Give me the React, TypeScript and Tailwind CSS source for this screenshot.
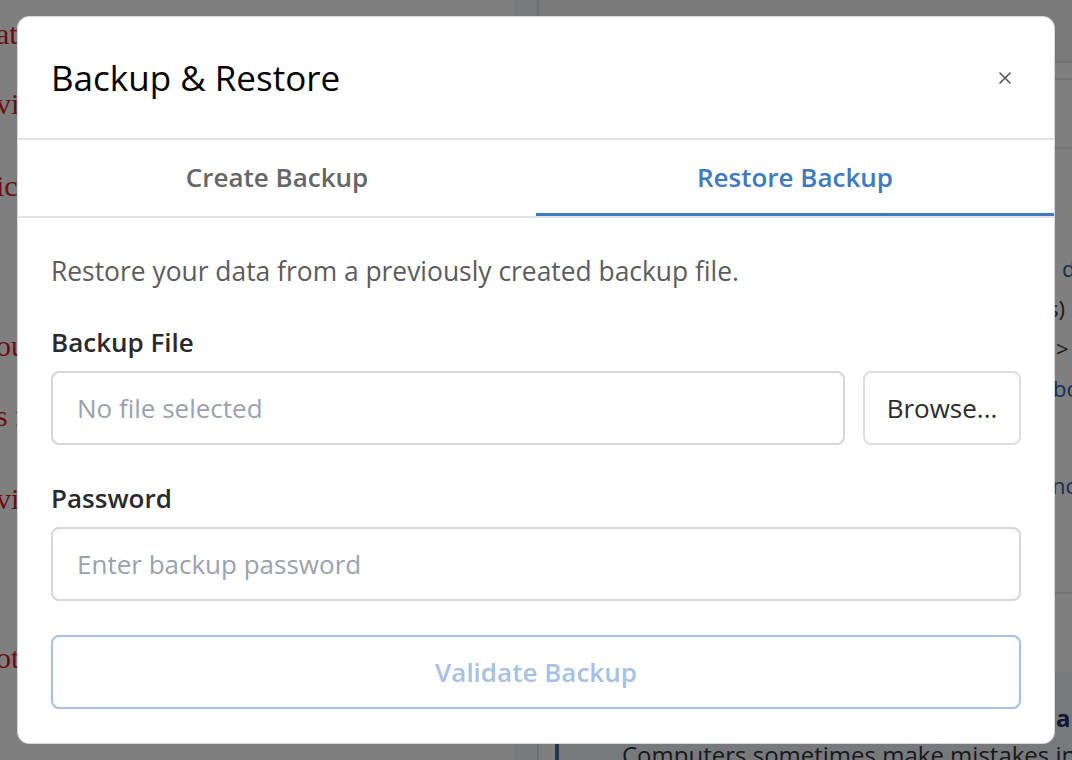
import { useState } from "react";

const leftLines = [
  { mt: "mt-[16px]", text: "atque the quick answer to what we have" },
  { mt: "mt-[34px]", text: "vi the people who have been using it" },
  { mt: "mt-[46px]", text: "ic the most common problem by far" },
  { mt: "mt-[124px]", text: "ou will want to keep a copy of this" },
  { mt: "mt-[34px]", text: "s r the settings and the history" },
  { mt: "mt-[47px]", text: "vi the other devices you have" },
  { mt: "mt-[123px]", text: "ot the notes kept in this place" },
];

function BackgroundPage() {
  return (
    <div className="flex h-[760px] w-[1072px] overflow-hidden bg-white">
      <div className="w-[514px] shrink-0 overflow-hidden font-['Liberation_Serif',serif] text-[30px] leading-[36px] text-[#d81c1c]">
        {leftLines.map((l, i) => (
          <div key={i} className={`${l.mt} -ml-[4px] whitespace-nowrap`}>
            {l.text}
          </div>
        ))}
      </div>
      <div className="w-[25px] shrink-0 border-r-2 border-[#dedede] bg-[#f3f5f8]" />
      <div className="flex min-w-0 flex-1 flex-col overflow-hidden font-['Open_Sans',sans-serif] text-[22px]">
        <div className="h-[63px] shrink-0 border-b-2 border-[#e4e4e4] bg-[#f2f2f2]" />
        <div className="h-[17px] shrink-0 border-b-2 border-[#e4e4e4]" />
        <div className="h-[69px] shrink-0 border-b-2 border-[#e4e4e4]" />
        <div className="flex flex-col pt-[99px] leading-[40px] whitespace-nowrap">
          <div className="pl-[523px] text-[#2b5ea8]">d</div>
          <div className="pl-[509px] text-[#333]">s)</div>
          <div className="pl-[517px] text-[#333]">&gt;</div>
          <div className="pl-[514px] text-[#2b5ea8]">bo</div>
          <div className="mt-[57px] pl-[513px] text-[#2b5ea8]">nc</div>
        </div>
        <div className="mt-[87px] shrink-0 border-b-2 border-[#e4e4e4]" />
        <div className="mt-[78px] ml-[16px] flex flex-1 flex-col border-l-4 border-[#4a6a96] bg-[#eef3fb] pl-[63px] pt-[28px]">
          <div className="pl-[434px] text-[24px] leading-[36px] font-bold text-[#1c2e6e]">a</div>
          <div className="mt-[1px] whitespace-nowrap text-[24px] leading-[36px] text-[#333]">
            Computers sometimes make mistakes in some
          </div>
        </div>
      </div>
    </div>
  );
}

export default function App() {
  const [tab, setTab] = useState<"create" | "restore">("restore");

  return (
    <div className="relative h-[760px] w-[1072px] overflow-hidden">
      <BackgroundPage />
      <div className="absolute inset-0 flex items-center justify-center bg-black/50 font-['Open_Sans',sans-serif]">
        <div className="flex h-[728px] w-[1038px] flex-col overflow-hidden rounded-[12px] border border-[#d6d6d6] bg-white">
          <div className="flex h-[123px] items-center justify-between border-b-2 border-[#e2e2e2] pl-[33px] pr-[37px]">
            <h2 className="text-[35px] leading-none text-black">Backup &amp; Restore</h2>
            <button className="flex h-[24px] w-[24px] items-center justify-center text-[#555]">
              <svg width="12" height="12" viewBox="0 0 12 12" fill="none" stroke="currentColor" strokeWidth="1.6" strokeLinecap="round">
                <path d="M1 1 L11 11 M11 1 L1 11" />
              </svg>
            </button>
          </div>

          <div className="flex h-[78px] border-b-2 border-[#e2e2e2]">
            <button
              onClick={() => setTab("create")}
              className={`flex flex-1 items-center justify-center border-b-[3px] pt-[1px] text-[26px] font-semibold ${
                tab === "create" ? "border-[#3d7abf] text-[#3d7abf]" : "border-transparent text-[#666]"
              }`}
            >
              Create Backup
            </button>
            <button
              onClick={() => setTab("restore")}
              className={`flex flex-1 items-center justify-center border-b-[3px] pt-[1px] text-[26px] font-semibold ${
                tab === "restore" ? "border-[#3d7abf] text-[#3d7abf]" : "border-transparent text-[#666]"
              }`}
            >
              Restore Backup
            </button>
          </div>

          <div className="flex flex-col px-[33px] pt-[35px] pb-[34px]">
            <p className="text-[26.4px] leading-[36px] text-[#5c5c5c]">
              Restore your data from a previously created backup file.
            </p>

            <label className="mt-[35px] text-[26px] font-semibold leading-[36px] text-[#2a2a2a]">Backup File</label>
            <div className="mt-[11px] flex gap-[18px]">
              <input
                readOnly
                placeholder="No file selected"
                className="h-[74px] min-w-0 flex-1 rounded-[8px] border-2 border-[#d3d7dd] px-[24px] text-[26px] text-[#333] outline-none placeholder:text-[#9aa2ae]"
              />
              <button className="h-[74px] w-[158px] shrink-0 rounded-[8px] border-2 border-[#dedede] text-[26px] text-[#2c2c2c]">
                Browse...
              </button>
            </div>

            <label className="mt-[35px] text-[26px] font-semibold leading-[36px] text-[#2a2a2a]">Password</label>
            <input
              type="password"
              placeholder="Enter backup password"
              className="mt-[11px] h-[74px] rounded-[8px] border-2 border-[#d3d7dd] px-[24px] text-[26px] text-[#333] outline-none placeholder:text-[#9aa2ae]"
            />

            <button
              disabled
              className="mt-[34px] h-[74px] rounded-[8px] border-2 border-[#a6c1e2] text-[26px] font-semibold text-[#a6c1e2]"
            >
              Validate Backup
            </button>
          </div>
        </div>
      </div>
    </div>
  );
}
